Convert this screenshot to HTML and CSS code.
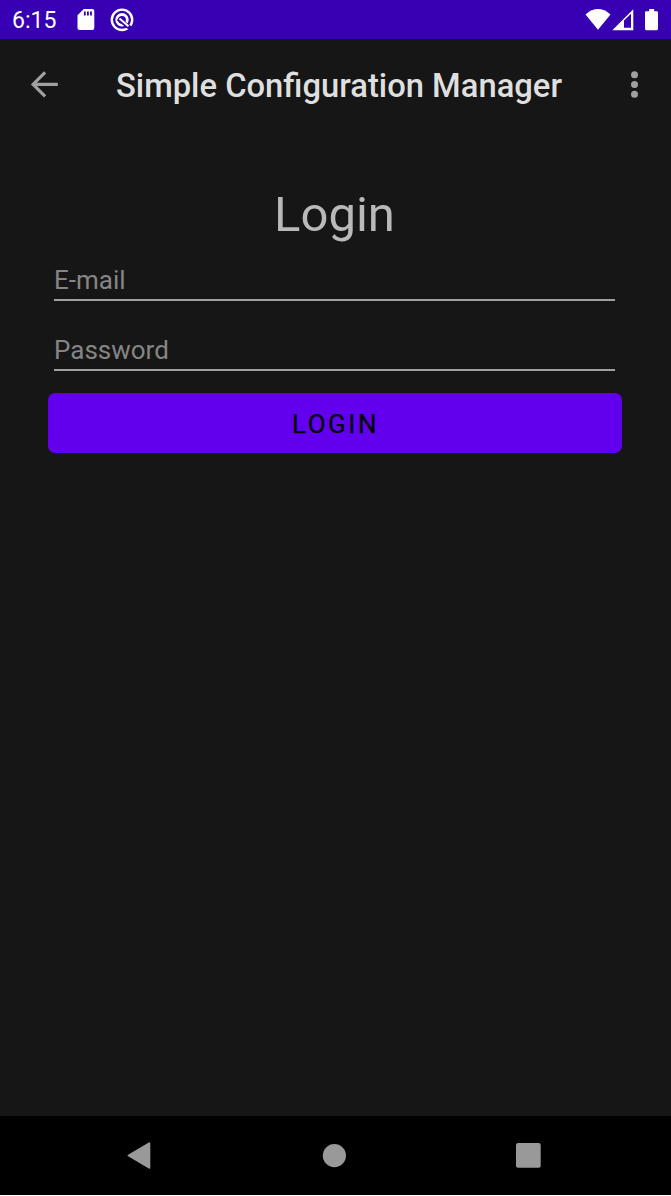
FILE: index.html
```html
<!DOCTYPE html>
<html lang="en">
<head>
<meta charset="utf-8">
<title>Simple Configuration Manager</title>
<link rel="stylesheet" href="styles.css">
</head>
<body>
<div class="screen">
  <header class="status">
    <span class="clock">6:15</span>
    <svg class="sd" width="18" height="22" viewBox="0 0 18 22"><path fill="#fff" fill-rule="evenodd" d="M6.800 0H15.300Q17.300 0 17.300 2V19Q17.300 21 15.300 21H2.500Q.500 21 .500 19V6.300ZM6.900 2.500V6.500H8.700V2.500ZM10 2.500V6.500H11.800V2.500ZM13.100 2.500V6.500H14.900V2.500Z"/></svg>
    <svg class="badge" width="24" height="24" viewBox="0 0 24 24" fill="none" stroke="#fff"><circle cx="12" cy="11.800" r="10.200" stroke-width="2.400"/><circle cx="12" cy="11.800" r="5.300" stroke-width="2.800"/><path stroke="#3700b3" stroke-width="4.200" d="M8.200 10.600L20.500 20.400"/><path stroke-width="2" d="M9.500 10.600L18.500 18.300"/></svg>
    <span class="spacer"></span>
    <svg class="wifi" width="26" height="22" viewBox="0 0 26 22"><path fill="#fff" d="M.500 5.500Q13 -5.300 25.500 5.500L13 20.800Z"/></svg>
    <svg class="signal" width="22" height="22" viewBox="0 0 22 22"><path fill="#fff" fill-rule="evenodd" d="M.300 21.200L21.300 .200V21.200ZM12 11.500V18.800H19V4.800Z"/></svg>
    <svg class="battery" width="14" height="22" viewBox="0 0 14 22"><path fill="#fff" d="M4.200 0H9.200V2.200H11.800Q13 2.200 13 3.500V19.600Q13 21.200 11.800 21.200H1.200Q0 21.200 0 19.600V3.500Q0 2.200 1.200 2.200H4.200Z"/></svg>
  </header>
  <div class="toolbar">
    <svg width="28" height="27" viewBox="0 0 28 27" fill="none" stroke="#a0a0a0" stroke-width="3.200"><path d="M26.800 13.300H2.300M14.100 1.300L2.100 13.300L14.100 25.300"/></svg>
    <h1 class="title">Simple Configuration Manager</h1>
    <svg width="8" height="28" viewBox="0 0 8 28" fill="#a0a0a0"><circle cx="3.500" cy="3.800" r="3.500"/><circle cx="3.500" cy="13.500" r="3.500"/><circle cx="3.500" cy="23.300" r="3.500"/></svg>
  </div>
  <main class="content">
    <h2 class="heading">Login</h2>
    <input class="field" type="email" placeholder="E-mail" aria-label="E-mail">
    <input class="field" type="password" placeholder="Password" aria-label="Password">
    <button class="submit" type="button">LOGIN</button>
  </main>
  <nav class="nav">
    <svg width="24" height="28" viewBox="0 0 24 28"><path fill="#999" stroke="#999" stroke-width="2" stroke-linejoin="round" d="M1.600 13.500L22.300 1.300V25.700Z"/></svg>
    <svg width="24" height="24" viewBox="0 0 24 24"><circle cx="12.400" cy="11.600" r="11.600" fill="#999"/></svg>
    <svg width="25" height="25" viewBox="0 0 25 25"><rect width="24.700" height="24.800" rx="2" fill="#999"/></svg>
  </nav>
</div>
</body>
</html>
```
FILE: styles.css
```css
* { box-sizing: border-box; }
body { margin: 0; background: #fff; font-family: Roboto, sans-serif; }
svg { display: block; flex: none; }
.screen { width: 671px; height: 1195px; display: flex; flex-direction: column; background: #161616; }
.status { height: 39px; flex: none; display: flex; align-items: center; padding: 0 12px; background: #3700b3; color: #fff; }
.clock { width: 65px; padding-top: 2px; font-size: 23px; line-height: 38px; }
.badge { margin-left: 15px; }
.spacer { flex: 1; }
.signal { margin-left: 1px; }
.battery { margin-left: 11px; }
.toolbar { height: 91px; flex: none; display: flex; align-items: center; padding: 0 32px 0 31px; }
.title { margin: 3px 0 0 57px; flex: 1; font-size: 32.750px; line-height: 40px; font-weight: 500; color: #dfdfdf; white-space: nowrap; }
.content { flex: 1; display: flex; flex-direction: column; padding: 56px 49.500px 0 47.500px; }
.heading { margin: 0; height: 58px; font-size: 49px; line-height: 58px; font-weight: 400; text-align: center; color: #b9b9b9; }
.field { height: 57px; margin: 0 6.500px; padding: 16px 0 0; border: 0; border-bottom: 2px solid #a0a0a0; border-radius: 0; outline: 0; background: transparent; font: 26px Roboto, sans-serif; color: #b9b9b9; }
.field + .field { height: 70px; padding-top: 29px; }
.field::placeholder { color: #858585; opacity: 1; }
.submit { height: 59.500px; margin-top: 22px; padding: 2px 0 0 2px; border: 0; border-radius: 7px; background: #6200ee; color: #000; font: 400 26px Roboto, sans-serif; letter-spacing: 2.500px; -webkit-text-stroke: .25px #000; }
.nav { height: 79px; flex: none; display: flex; align-items: center; justify-content: space-between; padding: 0 130px 0 127px; background: #000; }
```
